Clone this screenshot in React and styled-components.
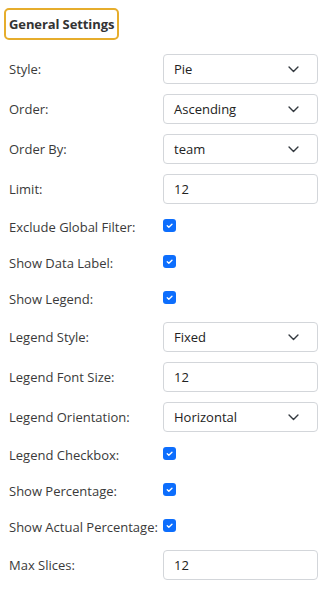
import React from "react";
import styled, { createGlobalStyle } from "styled-components";

const GlobalStyle = createGlobalStyle`
  body {
    margin: 0;
    background: #fff;
    font-family: "Open Sans", "Noto Sans", sans-serif;
    color: #333;
  }
`;

const Panel = styled.div`
  width: 325px;
  padding: 8px 4px 0 4px;
  box-sizing: border-box;
`;

const Header = styled.div`
  display: inline-flex;
  align-items: center;
  height: 32px;
  box-sizing: border-box;
  padding: 0 3px;
  border: 2px solid #e6ad2c;
  border-radius: 5px;
  font-size: 13px;
  font-weight: 700;
  letter-spacing: -0.1px;
  color: #333;
  margin-bottom: 14px;
`;

const Row = styled.div`
  display: flex;
  align-items: center;
  height: ${(p) => (p.$check ? 26 : 30)}px;
  margin-bottom: 10px;
  padding-left: 5px;
`;

const Label = styled.div`
  width: 154px;
  flex-shrink: 0;
  font-size: 13px;
  color: #3a3a3a;
  white-space: nowrap;
`;

const Field = styled.div`
  position: relative;
  width: 155px;
  height: 30px;
  box-sizing: border-box;
  border: 1px solid #d3d6da;
  border-radius: 4px;
  display: flex;
  align-items: center;
  padding-left: 10px;
  font-size: 13px;
  color: #222;
`;

const Chevron = styled.svg`
  position: absolute;
  right: 17px;
  top: 50%;
  margin-top: -5px;
  width: 13px;
  height: 10px;
`;

const Check = styled.div`
  width: 13px;
  height: 13px;
  margin-top: -4px;
  border-radius: 3px;
  background: #0d6efd;
  display: flex;
  align-items: center;
  justify-content: center;
`;

const rows = [
  { label: "Style:", type: "select", value: "Pie" },
  { label: "Order:", type: "select", value: "Ascending" },
  { label: "Order By:", type: "select", value: "team" },
  { label: "Limit:", type: "input", value: "12" },
  { label: "Exclude Global Filter:", type: "check" },
  { label: "Show Data Label:", type: "check" },
  { label: "Show Legend:", type: "check" },
  { label: "Legend Style:", type: "select", value: "Fixed" },
  { label: "Legend Font Size:", type: "input", value: "12" },
  { label: "Legend Orientation:", type: "select", value: "Horizontal" },
  { label: "Legend Checkbox:", type: "check" },
  { label: "Show Percentage:", type: "check" },
  { label: "Show Actual Percentage:", type: "check" },
  { label: "Max Slices:", type: "input", value: "12" },
];

const App = () => {
  return (
    <Panel>
      <GlobalStyle />
      <Header>General Settings</Header>
      {rows.map((r) => (
        <Row key={r.label} $check={r.type === "check"}>
          <Label>{r.label}</Label>
          {r.type === "check" ? (
            <Check>
              <svg width="9" height="9" viewBox="0 0 20 20">
                <path d="M5 10.5l3.5 3.5 7-7" fill="none" stroke="#fff" strokeWidth="3" strokeLinecap="round" strokeLinejoin="round" />
              </svg>
            </Check>
          ) : (
            <Field>
              {r.value}
              {r.type === "select" && (
                <Chevron viewBox="0 0 16 12">
                  <path d="M2.5 3.5l5.5 5.5 5.5-5.5" fill="none" stroke="#343a40" strokeWidth="1.7" strokeLinecap="round" strokeLinejoin="round" />
                </Chevron>
              )}
            </Field>
          )}
        </Row>
      ))}
    </Panel>
  );
};

export default App;
